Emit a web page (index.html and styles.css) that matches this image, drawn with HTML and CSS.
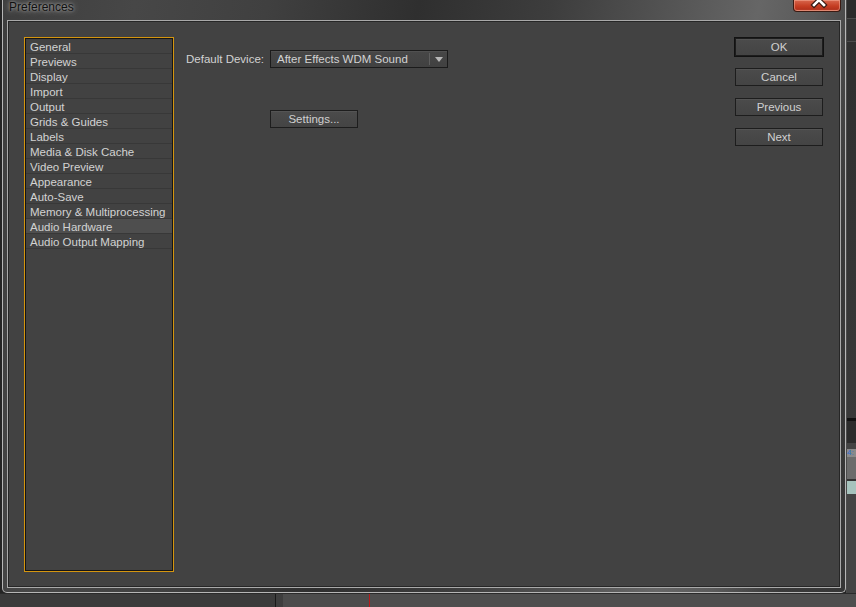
FILE: index.html
```html
<!DOCTYPE html>
<html>
<head>
<meta charset="utf-8">
<title>Preferences</title>
<link rel="stylesheet" href="styles.css">
</head>
<body>
<div class="screen">
  <div class="window">
    <div class="titlebar">
      <span class="title">Preferences</span>
      <div class="close">
        <svg width="46" height="11" viewBox="0 0 46 11">
          <path d="M20 -5 L30 5 M30 -5 L20 5" stroke="#3a1a12" stroke-width="5" stroke-linecap="square" fill="none"/>
          <path d="M20 -5 L30 5 M30 -5 L20 5" stroke="#ffffff" stroke-width="2.6" stroke-linecap="square" fill="none"/>
        </svg>
      </div>
    </div>
    <div class="client">
      <ul class="cats">
        <li>General</li>
        <li>Previews</li>
        <li>Display</li>
        <li>Import</li>
        <li>Output</li>
        <li>Grids &amp; Guides</li>
        <li>Labels</li>
        <li>Media &amp; Disk Cache</li>
        <li>Video Preview</li>
        <li>Appearance</li>
        <li>Auto-Save</li>
        <li>Memory &amp; Multiprocessing</li>
        <li class="sel">Audio Hardware</li>
        <li>Audio Output Mapping</li>
      </ul>
      <div class="main">
        <div class="device-row">
          <span class="label">Default Device:</span>
          <div class="select">
            <span class="value">After Effects WDM Sound</span>
            <span class="sep"></span>
            <span class="arrow-box"><span class="arrow"></span></span>
          </div>
        </div>
        <button class="btn settings">Settings...</button>
      </div>
      <div class="actions">
        <button class="btn default">OK</button>
        <button class="btn">Cancel</button>
        <button class="btn">Previous</button>
        <button class="btn">Next</button>
      </div>
    </div>
  </div>
  <div class="side-strip">
    <div class="s1"></div>
    <div class="s2"></div>
    <div class="s3"></div>
    <div class="s4"></div>
    <div class="s5"></div>
    <div class="s6">4:</div>
    <div class="s7"></div>
    <div class="s8"></div>
    <div class="s9"></div>
  </div>
  <div class="bottom-strip">
    <div class="b1"></div>
    <div class="b2"></div>
    <div class="b3"></div>
    <div class="b4"></div>
    <div class="b5"></div>
    <div class="b6"></div>
  </div>
</div>
</body>
</html>
```

FILE: styles.css
```css
html, body {
  margin: 0;
  padding: 0;
  background: #262626;
  font-family: "Liberation Sans", Arial, sans-serif;
}

.screen {
  display: grid;
  grid-template-columns: 846px 10px;
  grid-template-rows: 593px 14px;
  width: 856px;
  height: 607px;
  overflow: hidden;
  background: #242424;
}

.window {
  margin-left: 2px;
  box-sizing: border-box;
  height: 593px;
  display: flex;
  flex-direction: column;
  padding: 0 4px 4px 4px;
  border: 1px solid #b6b6b6;
  border-top: none;
  border-radius: 0 0 5px 5px;
  background: linear-gradient(100deg, #3e3e3e 0%, #474747 14%, #404040 28%, #2f2f2f 44%, #3d3d3d 58%, #4f4f4f 68%, #666 80%, #5a5a5a 86%, #3a3a3a 93%, #363636 100%);
}

.titlebar {
  height: 20px;
  display: flex;
  align-items: flex-start;
  padding-left: 2px;
}

.title {
  font-size: 12px;
  line-height: 14px;
  color: #111;
  text-shadow: 0 0 3px rgba(255,255,255,0.55), 0 0 7px rgba(255,255,255,0.4), 0 0 12px rgba(255,255,255,0.25);
}

.close {
  margin-left: auto;
  width: 48px;
  height: 12px;
  box-sizing: border-box;
  border: 1px solid #3b1a12;
  border-top: none;
  border-radius: 0 0 4px 4px;
  background: linear-gradient(180deg, #d8674e 0%, #c53d22 55%, #b3321c 85%, #cf6a52 100%);
  box-shadow: inset 0 0 0 1px rgba(255, 190, 170, 0.45);
  overflow: hidden;
}

.close svg {
  display: block;
}

.client {
  flex: 1;
  display: flex;
  border: 1px solid #a9a9a9;
  box-shadow: inset 0 0 0 1px #262626;
  background: #424242;
  padding: 16px 17px 15px 16px;
}

.cats {
  width: 150px;
  box-sizing: border-box;
  margin: 0;
  padding: 1px;
  list-style: none;
  border: 1px solid #d4950f;
  box-shadow: inset 0 0 0 1px #151515;
  flex-shrink: 0;
}

.cats li {
  height: 13px;
  padding-top: 1px;
  line-height: 14px;
  border-bottom: 1px solid #383838;
  padding-left: 4px;
  font-size: 11.5px;
  color: #d2d2d2;
  white-space: nowrap;
}

.cats li.sel {
  background: #4e4e4e;
}

.main {
  flex: 1;
  padding: 13px 0 0 12px;
}

.device-row {
  display: flex;
  align-items: center;
  height: 18px;
}

.label {
  width: 84px;
  font-size: 11.5px;
  color: #d2d2d2;
}

.select {
  width: 178px;
  height: 18px;
  box-sizing: border-box;
  display: flex;
  align-items: center;
  border: 1px solid #1b1b1b;
  background: linear-gradient(180deg, #474747 0%, #414141 100%);
  box-shadow: inset 0 1px 0 rgba(255,255,255,0.05);
}

.value {
  flex: 1;
  padding-left: 6px;
  font-size: 11.5px;
  color: #d2d2d2;
  white-space: nowrap;
}

.sep {
  width: 1px;
  height: 12px;
  background: #5e5e5e;
}

.arrow-box {
  width: 17px;
  display: flex;
  justify-content: center;
  align-items: center;
}

.arrow {
  width: 0;
  height: 0;
  border-left: 4px solid transparent;
  border-right: 4px solid transparent;
  border-top: 5px solid #b8b8b8;
}

.btn {
  display: block;
  height: 18px;
  box-sizing: border-box;
  padding: 0;
  border: 1px solid #1d1d1d;
  background: linear-gradient(180deg, #4b4b4b 0%, #444 100%);
  box-shadow: inset 0 1px 0 rgba(255,255,255,0.05);
  color: #d0d0d0;
  font-family: "Liberation Sans", Arial, sans-serif;
  font-size: 11.5px;
  line-height: 16px;
  text-align: center;
}

.settings {
  margin: 42px 0 0 84px;
  width: 88px;
}

.actions {
  width: 88px;
  display: flex;
  flex-direction: column;
  gap: 12px;
  padding-top: 1px;
  flex-shrink: 0;
}

.actions .btn {
  width: 88px;
}

.btn.default {
  outline: 1px solid #121212;
}

.side-strip {
  display: flex;
  flex-direction: column;
  border-left: 1px solid #4a4a4a;
  background: #2e2e2e;
}

.s1 { height: 18px; background: #2b2b2b; border-bottom: 1px solid #4c4c4c; }
.s2 { height: 22px; background: #333; border-bottom: 1px solid #4c4c4c; }
.s3 { height: 376px; background: linear-gradient(180deg, #2f2f2f, #393939); }
.s4 { height: 3px; background: #111; }
.s5 { height: 22px; background: #2c2c2c; border-bottom: 6px solid #444; }
.s6 { height: 8px; background: #8a8a8a; font-size: 8px; line-height: 8px; color: #2a6fd0; overflow: hidden; }
.s7 { height: 22px; background: #6c6c6c; border-bottom: 2px solid #333; }
.s8 { height: 13px; background: #a6c3bd; }
.s9 { flex: 1; background: #444; }

.bottom-strip {
  grid-column: 1 / 3;
  display: flex;
  border-top: 1px solid #2a2a2a;
}

.b1 { width: 275px; background: #3b3b3b; }
.b2 { width: 1px; background: #191919; }
.b3 { width: 7px; background: #3e3e3e; }
.b4 { width: 86px; background: #4c4c4c; }
.b5 { width: 1px; background: #b81a1a; }
.b6 { flex: 1; background: #4e4e4e; }
```
